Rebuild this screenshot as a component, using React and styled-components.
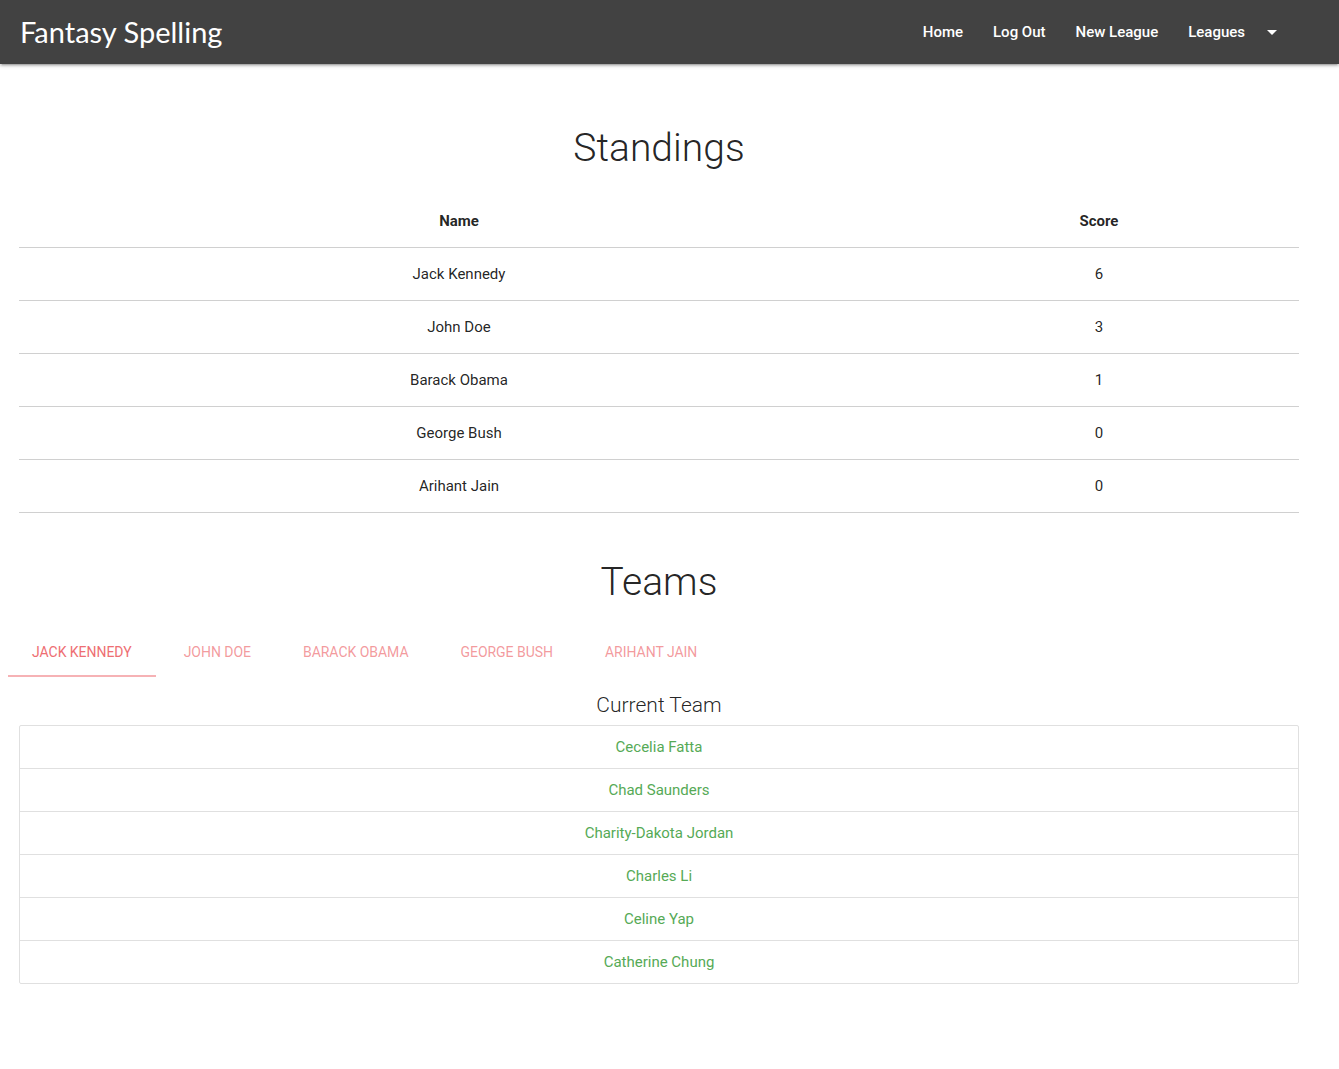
import React, { useState } from 'react'
import styled, { createGlobalStyle } from 'styled-components'

const GlobalStyle = createGlobalStyle`
  html, body {
    margin: 0;
    padding: 0;
    background: #fff;
    font-family: Roboto, 'Liberation Sans', sans-serif;
    color: rgba(0, 0, 0, 0.87);
    font-size: 15px;
  }
`

const standings = [
  { name: 'Jack Kennedy', score: 6 },
  { name: 'John Doe', score: 3 },
  { name: 'Barack Obama', score: 1 },
  { name: 'George Bush', score: 0 },
  { name: 'Arihant Jain', score: 0 },
]

const teams = {
  'Jack Kennedy': ['Cecelia Fatta', 'Chad Saunders', 'Charity-Dakota Jordan', 'Charles Li', 'Celine Yap', 'Catherine Chung'],
  'John Doe': [],
  'Barack Obama': [],
  'George Bush': [],
  'Arihant Jain': [],
}

export default function App() {
  const [active, setActive] = useState('Jack Kennedy')
  return (
    <>
      <GlobalStyle />
      <Nav>
        <Brand>Fantasy Spelling</Brand>
        <NavLinks>
          <NavLink>Home</NavLink>
          <NavLink>Log Out</NavLink>
          <NavLink>New League</NavLink>
          <NavLink>
            Leagues
            <Caret />
          </NavLink>
        </NavLinks>
      </Nav>

      <Main>
        <Heading>Standings</Heading>
        <Table>
          <thead>
            <tr>
              <Th $width={880}>Name</Th>
              <Th>Score</Th>
            </tr>
          </thead>
          <tbody>
            {standings.map((s) => (
              <tr key={s.name}>
                <Td>{s.name}</Td>
                <Td>{s.score}</Td>
              </tr>
            ))}
          </tbody>
        </Table>

        <Heading $top={47}>Teams</Heading>
      </Main>

      <Tabs>
        {standings.map((s) => (
          <Tab key={s.name} $active={active === s.name} onClick={() => setActive(s.name)}>
            {s.name}
          </Tab>
        ))}
      </Tabs>

      <Main>
        <SubHeading>Current Team</SubHeading>
        <Collection>
          {teams[active].map((p) => (
            <Item key={p}>{p}</Item>
          ))}
        </Collection>
      </Main>
    </>
  )
}

const Nav = styled.nav`
  height: 64px;
  background: #424242;
  box-shadow: 0 2px 2px 0 rgba(0,0,0,0.14), 0 3px 1px -2px rgba(0,0,0,0.12), 0 1px 5px 0 rgba(0,0,0,0.2);
  display: flex;
  align-items: center;
  justify-content: space-between;
  padding: 0 47px 0 20px;
  color: #fff;
`

const Brand = styled.div`
  font-family: Lato, 'Open Sans', sans-serif;
  font-size: 29px;
  line-height: 64px;
`

const NavLinks = styled.div`
  display: flex;
  align-items: center;
  height: 64px;
`

const NavLink = styled.a`
  display: flex;
  align-items: center;
  padding: 0 15px;
  font-size: 15px;
  font-weight: 500;
  color: #fff;
  cursor: pointer;
  height: 64px;
`

const Caret = styled.span`
  margin-left: 22px;
  width: 0;
  height: 0;
  border-left: 5px solid transparent;
  border-right: 5px solid transparent;
  border-top: 5px solid #fff;
`

const Main = styled.div`
  width: 1280px;
  margin-left: 19px;
`

const Heading = styled.h3`
  margin: ${(p) => p.$top || 62}px 0 25px;
  text-align: center;
  font-size: 39px;
  font-weight: 300;
  line-height: 44px;
  color: rgba(0, 0, 0, 0.87);
`

const Table = styled.table`
  width: 100%;
  border-collapse: collapse;
  tr {
    border-bottom: 1px solid #d0d0d0;
  }
`

const Th = styled.th`
  box-sizing: border-box;
  width: ${(p) => (p.$width ? `${p.$width}px` : 'auto')};
  padding: 15px 5px;
  font-size: 15px;
  font-weight: 700;
  line-height: 22px;
  text-align: center;
`

const Td = styled.td`
  padding: 15px 5px;
  font-size: 15px;
  line-height: 22px;
  text-align: center;
`

const Tabs = styled.div`
  display: flex;
  gap: 4px;
  height: 48px;
  margin: 25px 0 0 8px;
`

const Tab = styled.div`
  padding: 0 24px;
  height: 48px;
  box-sizing: border-box;
  display: flex;
  align-items: center;
  font-size: 14px;
  letter-spacing: -0.03px;
  text-transform: uppercase;
  cursor: pointer;
  color: ${(p) => (p.$active ? '#ee6e73' : 'rgba(238, 110, 115, 0.7)')};
  border-bottom: 2px solid ${(p) => (p.$active ? '#f6b2b5' : 'transparent')};
`

const SubHeading = styled.h5`
  margin: 14px 0 6px;
  text-align: center;
  font-size: 21px;
  font-weight: 300;
  line-height: 28px;
  color: rgba(0, 0, 0, 0.87);
`

const Collection = styled.ul`
  list-style: none;
  margin: 0;
  padding: 0;
  border: 1px solid #e0e0e0;
  border-radius: 2px;
`

const Item = styled.li`
  padding: 10px 20px;
  line-height: 22px;
  text-align: center;
  font-size: 15px;
  color: #56aa56;
  border-bottom: 1px solid #e0e0e0;
  &:last-child {
    border-bottom: none;
  }
`
